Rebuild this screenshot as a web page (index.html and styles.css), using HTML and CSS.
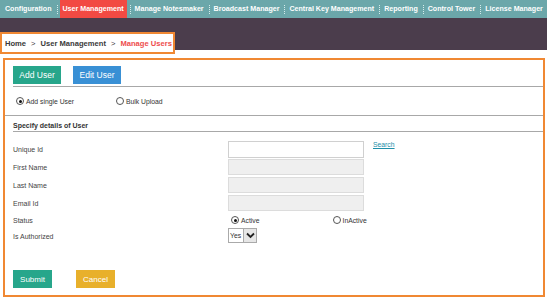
FILE: index.html
```html
<!DOCTYPE html>
<html>
<head>
<meta charset="utf-8">
<link rel="stylesheet" href="styles.css">
</head>
<body>
<nav class="topnav">
  <a class="nav-item">Configuration</a>
  <a class="nav-item active">User Management</a>
  <a class="nav-item">Manage Notesmaker</a>
  <a class="nav-item">Broadcast Manager</a>
  <a class="nav-item">Central Key Management</a>
  <a class="nav-item">Reporting</a>
  <a class="nav-item">Control Tower</a>
  <a class="nav-item last">License Manager</a>
</nav>
<div class="band">
  <div class="crumbs">
    <span>Home</span><span class="sep">&gt;</span><span>User Management</span><span class="sep">&gt;</span><span class="current">Manage Users</span>
  </div>
</div>
<main class="panel">
  <div class="tabs">
    <button class="btn green">Add User</button>
    <button class="btn blue">Edit User</button>
  </div>
  <div class="mode-row">
    <label class="radio"><span class="dot on"></span>Add single User</label>
    <label class="radio"><span class="dot"></span>Bulk Upload</label>
  </div>
  <div class="section-title">Specify details of User</div>
  <div class="form">
    <div class="lbl">Unique Id</div>
    <div class="field"><span class="input"></span></div>
    <a class="search">Search</a>

    <div class="lbl">First Name</div>
    <div class="field"><span class="input dis"></span></div>
    <div></div>

    <div class="lbl">Last Name</div>
    <div class="field"><span class="input dis"></span></div>
    <div></div>

    <div class="lbl">Email Id</div>
    <div class="field"><span class="input dis"></span></div>
    <div></div>

    <div class="lbl">Status</div>
    <div class="field radios">
      <label class="radio"><span class="dot on"></span>Active</label>
      <label class="radio"><span class="dot"></span>InActive</label>
    </div>
    <div></div>

    <div class="lbl auth">Is Authorized</div>
    <div class="field top">
      <span class="select"><span class="sel-text">Yes</span><span class="sel-arrow"><svg width="9" height="7" viewBox="0 0 9 7"><path d="M1 1.5 L4.5 5 L8 1.5" fill="none" stroke="#222" stroke-width="1.8"/></svg></span></span>
    </div>
    <div></div>
  </div>
  <div class="actions">
    <button class="btn green small">Submit</button>
    <button class="btn yellow small">Cancel</button>
  </div>
</main>
</body>
</html>
```
FILE: styles.css
```css
* { box-sizing: border-box; }
html, body { margin: 0; padding: 0; background: #fff; }
body {
  font-family: "Liberation Sans", Arial, sans-serif;
  width: 547px;
  height: 300px;
  overflow: hidden;
}
.topnav {
  display: flex;
  height: 18px;
  background: #6ba7aa;
  align-items: stretch;
  padding-left: 3px;
  overflow: hidden;
}
.nav-item {
  display: flex;
  align-items: center;
  color: #fff;
  font-size: 7.1px;
  font-weight: bold;
  padding: 0 2px;
  margin-right: 6px;
  position: relative;
  white-space: nowrap;
}
.nav-item::after {
  content: "";
  position: absolute;
  right: -4px;
  top: 5px;
  height: 9px;
  border-right: 1px dotted #d6ecec;
}
.nav-item.last { margin-right: 0; }
.nav-item.last::after { display: none; }
.nav-item.active { background: #f24a43; padding: 0 3px; }
.band {
  background: linear-gradient(#4b3d4c 0, #4b3d4c 32px, #fff 32px);
  padding-top: 14px;
  height: 36px;
}
.crumbs {
  width: 175px;
  height: 22px;
  border: 2px solid #f08833;
  background: #fff;
  display: flex;
  align-items: center;
  padding-left: 3px;
  font-size: 7.6px;
  font-weight: bold;
  color: #3a3a3a;
}
.crumbs .sep { margin: 0 5px; font-weight: normal; }
.crumbs .current { color: #ee4d4d; }
.panel {
  margin: 4px 2px 0 3px;
  height: 239px;
  border: 2px solid #f08833;
  display: flex;
  flex-direction: column;
}
.tabs {
  display: flex;
  gap: 12px;
  padding-top: 6px;
  height: 27px;
  border-bottom: 1px solid #a8a8a8;
  margin-left: 8px;
}
.btn {
  border: none;
  color: #fff;
  font-family: "Liberation Sans", Arial, sans-serif;
  font-size: 8.5px;
  height: 18px;
  padding: 0;
  width: 48px;
  display: flex;
  align-items: center;
  justify-content: center;
}
.btn.green { background: #27a68b; }
.btn.blue { background: #3990d5; }
.btn.yellow { background: #e8b02b; }
.btn.small { width: 39px; font-size: 8px; }
.mode-row {
  height: 29px;
  border-bottom: 1px solid #a8a8a8;
  display: flex;
  align-items: center;
  padding-left: 11px;
  gap: 42px;
}
.radio {
  display: inline-flex;
  align-items: center;
  font-size: 6.8px;
  color: #333;
  gap: 2px;
}
.dot {
  width: 8px;
  height: 8px;
  border-radius: 50%;
  border: 1px solid #555;
  background: #fff;
  display: inline-block;
  position: relative;
}
.dot.on::after {
  content: "";
  position: absolute;
  left: 1.5px;
  top: 1.5px;
  width: 3px;
  height: 3px;
  border-radius: 50%;
  background: #111;
}
.section-title {
  margin-left: 8px;
  height: 16px;
  padding-top: 3px;
  border-bottom: 1px solid #a8a8a8;
  font-size: 7px;
  font-weight: bold;
  color: #333;
  display: flex;
  align-items: center;
}
.form {
  display: grid;
  grid-template-columns: 215px 136px 1fr;
  grid-template-rows: 18px 18px 18px 18px 16px 18px;
  margin: 8px 0 0 8px;
}
.lbl {
  font-size: 7px;
  color: #444;
  display: flex;
  align-items: center;
}
.lbl.auth { padding-bottom: 2px; }
.field { display: flex; align-items: center; }
.field.top { align-items: flex-start; }
.input {
  display: block;
  width: 136px;
  height: 17px;
  border: 1px solid #d0d0d0;
  background: #fff;
}
.input.dis { background: #efefef; border-color: #dcdcdc; height: 16px; }
.search {
  font-size: 6.8px;
  color: #1e8fa9;
  text-decoration: underline;
  padding-top: 1px;
  margin-left: 9px;
}
.radios { gap: 73px; padding-left: 3px; }
.select {
  display: inline-flex;
  height: 15px;
  border: 1px solid #aaa;
}
.sel-text {
  font-size: 6.8px;
  color: #333;
  display: flex;
  align-items: center;
  padding: 0 2px 0 1px;
  background: #fff;
}
.sel-arrow {
  width: 13px;
  background: #e6e6e6;
  border-left: 1px solid #aaa;
  display: flex;
  align-items: center;
  justify-content: center;
}
.actions {
  display: flex;
  gap: 24px;
  margin: 24px 0 0 8px;
}
```
